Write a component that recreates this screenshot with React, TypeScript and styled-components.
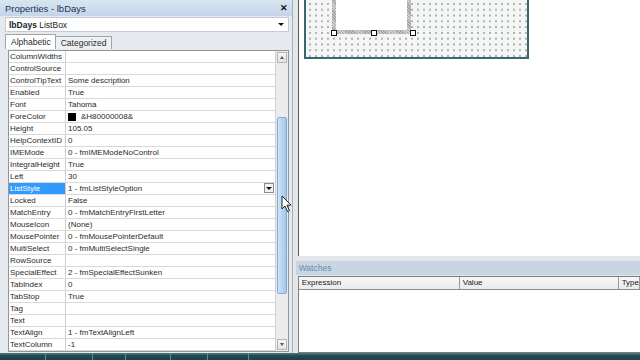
import React from 'react';
import styled, { createGlobalStyle } from 'styled-components';

const GlobalStyle = createGlobalStyle`
  html, body {
    margin: 0;
    padding: 0;
  }
  body {
    width: 640px;
    height: 360px;
    overflow: hidden;
    background: #ffffff;
    font-family: 'Liberation Sans', Arial, sans-serif;
  }
`;

interface PropRow {
  name: string;
  value?: string;
  swatch?: string;
  selected?: boolean;
}

const rows: PropRow[] = [
  { name: 'ColumnWidths' },
  { name: 'ControlSource' },
  { name: 'ControlTipText', value: 'Some description' },
  { name: 'Enabled', value: 'True' },
  { name: 'Font', value: 'Tahoma' },
  { name: 'ForeColor', value: '&H80000008&', swatch: '#000000' },
  { name: 'Height', value: '105.05' },
  { name: 'HelpContextID', value: '0' },
  { name: 'IMEMode', value: '0 - fmIMEModeNoControl' },
  { name: 'IntegralHeight', value: 'True' },
  { name: 'Left', value: '30' },
  { name: 'ListStyle', value: '1 - fmListStyleOption', selected: true },
  { name: 'Locked', value: 'False' },
  { name: 'MatchEntry', value: '0 - fmMatchEntryFirstLetter' },
  { name: 'MouseIcon', value: '(None)' },
  { name: 'MousePointer', value: '0 - fmMousePointerDefault' },
  { name: 'MultiSelect', value: '0 - fmMultiSelectSingle' },
  { name: 'RowSource' },
  { name: 'SpecialEffect', value: '2 - fmSpecialEffectSunken' },
  { name: 'TabIndex', value: '0' },
  { name: 'TabStop', value: 'True' },
  { name: 'Tag' },
  { name: 'Text' },
  { name: 'TextAlign', value: '1 - fmTextAlignLeft' },
  { name: 'TextColumn', value: '-1' },
];

const App: React.FC = () => {
  return (
    <Shell>
      <GlobalStyle />
      <Workspace>
        <PropertiesPanel>
          <TitleBar>
            <span>Properties - lbDays</span>
            <CloseButton>✕</CloseButton>
          </TitleBar>
          <ObjectCombo>
            <span>
              <b>lbDays</b> ListBox
            </span>
            <ComboArrow />
          </ObjectCombo>
          <TabStrip>
            <Tab active>Alphabetic</Tab>
            <Tab>Categorized</Tab>
          </TabStrip>
          <GridFrame>
            <GridRows>
              {rows.map((row) => (
                <Row key={row.name}>
                  <NameCell selected={row.selected}>{row.name}</NameCell>
                  <ValueCell>
                    {row.swatch && <Swatch color={row.swatch} />}
                    <span>{row.value}</span>
                    {row.selected && (
                      <DropButton>
                        <ComboArrow />
                      </DropButton>
                    )}
                  </ValueCell>
                </Row>
              ))}
            </GridRows>
            <ScrollBar>
              <ScrollButton>
                <ScrollArrow up />
              </ScrollButton>
              <ScrollTrack>
                <ScrollThumb />
              </ScrollTrack>
              <ScrollButton>
                <ScrollArrow />
              </ScrollButton>
            </ScrollBar>
          </GridFrame>
        </PropertiesPanel>

        <RightArea>
          <CodeArea>
            <FormDesigner>
              <ListBoxControl>
                <ListBoxInner />
                <Handle left={-3} />
                <Handle left={37} />
                <Handle left={76} />
              </ListBoxControl>
            </FormDesigner>
          </CodeArea>
          <WatchesPanel>
            <WatchesTitle>Watches</WatchesTitle>
            <WatchesList>
              <WatchHeader>
                <HeaderCell width={161}>Expression</HeaderCell>
                <HeaderCell width={159}>Value</HeaderCell>
                <HeaderCell>Type</HeaderCell>
              </WatchHeader>
            </WatchesList>
          </WatchesPanel>
        </RightArea>
      </Workspace>
      <Taskbar>
        <TaskSlot width={46} />
        <TaskSlot width={32} />
        <TaskSlot width={44} />
        <TaskSlot width={36} />
        <TaskSlot width={40} />
        <TaskSlot width={36} />
      </Taskbar>
      <Cursor width="12" height="18" viewBox="0 0 12 18">
        <path
          d="M1 1 L1 14 L4 11 L6.5 16.5 L8.5 15.6 L6 10.2 L10 10.2 Z"
          fill="#ffffff"
          stroke="#222222"
          strokeWidth="1"
          strokeLinejoin="round"
        />
      </Cursor>
    </Shell>
  );
};

export default App;

const Shell = styled.div`
  position: relative;
  width: 640px;
  height: 360px;
  display: flex;
  flex-direction: column;
  overflow: hidden;
`;

const Workspace = styled.div`
  flex: 1;
  display: flex;
  min-height: 0;
`;

const PropertiesPanel = styled.div`
  width: 292px;
  display: flex;
  flex-direction: column;
  background: #e6e9ed;
  border-right: 1px solid #a9afb6;
`;

const TitleBar = styled.div`
  height: 16px;
  display: flex;
  align-items: center;
  justify-content: space-between;
  padding: 0 4px 0 5px;
  background: linear-gradient(#d9e5f2, #c4d5e8);
  color: #1c3358;
  font-size: 9.5px;
`;

const CloseButton = styled.span`
  font-size: 9px;
  font-weight: bold;
  color: #111;
`;

const ObjectCombo = styled.div`
  height: 13px;
  margin: 1px 3px 0 5px;
  display: flex;
  align-items: center;
  justify-content: space-between;
  padding: 0 4px 0 3px;
  background: #ffffff;
  border: 1px solid #c3ccd6;
  font-size: 8.5px;
  color: #222;
  b {
    font-weight: bold;
  }
`;

const ComboArrow = styled.span`
  width: 0;
  height: 0;
  border-left: 3px solid transparent;
  border-right: 3px solid transparent;
  border-top: 3px solid #111;
`;

const TabStrip = styled.div`
  height: 15px;
  margin-top: 2px;
  padding-left: 5px;
  display: flex;
  align-items: flex-end;
`;

const Tab = styled.div<{ active?: boolean }>`
  height: ${(p) => (p.active ? 15 : 13)}px;
  padding: 0 4px 0 5px;
  display: flex;
  align-items: center;
  box-sizing: border-box;
  border: 1px solid #9ea6ae;
  border-bottom: none;
  border-left: ${(p) => (p.active ? '1px solid #9ea6ae' : 'none')};
  background: ${(p) => (p.active ? '#ffffff' : '#eef0f2')};
  font-size: 8.5px;
  color: #2a2a2a;
`;

const GridFrame = styled.div`
  height: 300px;
  margin: 1px 3px 0 8px;
  display: flex;
  border: 1px solid #8f969c;
  background: #ffffff;
`;

const GridRows = styled.div`
  flex: 1;
  display: flex;
  flex-direction: column;
`;

const Row = styled.div`
  height: 12px;
  display: grid;
  grid-template-columns: 57px 1fr;
  box-sizing: border-box;
  border-bottom: 1px solid #d9d9d9;
  font-size: 8px;
  line-height: 11px;
  color: #2a2a2a;
`;

const NameCell = styled.div<{ selected?: boolean }>`
  padding-left: 1px;
  border-right: 1px solid #cfcfcf;
  white-space: nowrap;
  overflow: hidden;
  background: ${(p) => (p.selected ? '#3399ff' : 'transparent')};
  color: ${(p) => (p.selected ? '#ffffff' : 'inherit')};
`;

const ValueCell = styled.div`
  position: relative;
  display: flex;
  align-items: center;
  padding-left: 2px;
  white-space: nowrap;
`;

const Swatch = styled.span<{ color: string }>`
  width: 8px;
  height: 8px;
  margin-right: 5px;
  background: ${(p) => p.color};
`;

const DropButton = styled.span`
  position: absolute;
  right: 1px;
  top: 0;
  width: 10px;
  height: 10px;
  display: flex;
  align-items: center;
  justify-content: center;
  box-sizing: border-box;
  border: 1px solid #8c8c8c;
  background: #f1f1f1;
`;

const ScrollBar = styled.div`
  width: 12px;
  display: flex;
  flex-direction: column;
  background: #ebebeb;
  border-left: 1px solid #d2d2d2;
`;

const ScrollButton = styled.div`
  height: 11px;
  margin: 1px;
  display: flex;
  align-items: center;
  justify-content: center;
  box-sizing: border-box;
  border: 1px solid #b5b5b5;
  background: linear-gradient(#f8f8f8, #e2e2e2);
`;

const ScrollArrow = styled.span<{ up?: boolean }>`
  width: 0;
  height: 0;
  border-left: 2.5px solid transparent;
  border-right: 2.5px solid transparent;
  ${(p) =>
    p.up ? 'border-bottom: 3px solid #555;' : 'border-top: 3px solid #555;'}
`;

const ScrollTrack = styled.div`
  flex: 1;
  padding-top: 53px;
  padding-bottom: 44px;
  display: flex;
`;

const ScrollThumb = styled.div`
  flex: 1;
  margin: 0 1px;
  border: 1px solid #7fa9d1;
  border-radius: 2px;
  background: linear-gradient(90deg, #d2e6f8, #b5d5f2 50%, #a3c8ec);
`;

const RightArea = styled.div`
  flex: 1;
  display: flex;
  flex-direction: column;
  background: #e4e7ea;
  padding-left: 5px;
`;

const CodeArea = styled.div`
  height: 256px;
  background: #ffffff;
  border-left: 1px solid #5a5a5a;
  padding-left: 5px;
`;

const FormDesigner = styled.div`
  width: 221px;
  height: 57px;
  box-sizing: content-box;
  border: 2px solid #3b6571;
  border-top: none;
  background-color: #f4f5f5;
  background-image: radial-gradient(circle, #9a9a9a 0.6px, transparent 1px);
  background-size: 6px 5.8px;
  background-position: 1px 1px;
`;

const ListBoxControl = styled.div`
  position: relative;
  width: 79px;
  height: 34px;
  margin-left: 26px;
  box-sizing: border-box;
  padding: 0 4px 4px 4px;
  background: repeating-linear-gradient(45deg, #a4a4a4 0 1px, #d2d2d2 1px 2px);
`;

const ListBoxInner = styled.div`
  height: 100%;
  background: #ffffff;
`;

const Handle = styled.span<{ left: number }>`
  position: absolute;
  bottom: -2px;
  left: ${(p) => p.left + 2}px;
  width: 4px;
  height: 4px;
  background: #ffffff;
  border: 1px solid #111;
`;

const WatchesPanel = styled.div`
  flex: 1;
  margin-top: 5px;
  margin-left: -2px;
  display: flex;
  flex-direction: column;
`;

const WatchesTitle = styled.div`
  height: 14px;
  display: flex;
  align-items: center;
  padding-left: 3px;
  background: #c8d5e3;
  color: #6d8cb0;
  font-size: 8.5px;
`;

const WatchesList = styled.div`
  flex: 1;
  margin-left: 2px;
  margin-top: 1px;
  background: #ffffff;
  border: 1px solid #7d7d7d;
  border-right: none;
`;

const WatchHeader = styled.div`
  height: 12px;
  display: flex;
  border-bottom: 1px solid #8a8a8a;
  background: linear-gradient(#f7f7f7, #ebebeb);
`;

const HeaderCell = styled.div<{ width?: number }>`
  ${(p) => (p.width ? `width: ${p.width}px;` : 'flex: 1;')}
  padding-left: 3px;
  box-sizing: border-box;
  border-right: 1px solid #9a9a9a;
  font-size: 8px;
  line-height: 12px;
  color: #222;
  white-space: nowrap;
  overflow: hidden;
`;

const Taskbar = styled.div`
  height: 7px;
  display: flex;
  padding-left: 45px;
  background: linear-gradient(#4d7d86, #23484f 40%, #1f4147);
`;

const TaskSlot = styled.div<{ width: number }>`
  width: ${(p) => p.width}px;
  border-left: 1px solid #5d8a92;
`;

const Cursor = styled.svg`
  position: absolute;
  left: 281px;
  top: 195px;
`;
